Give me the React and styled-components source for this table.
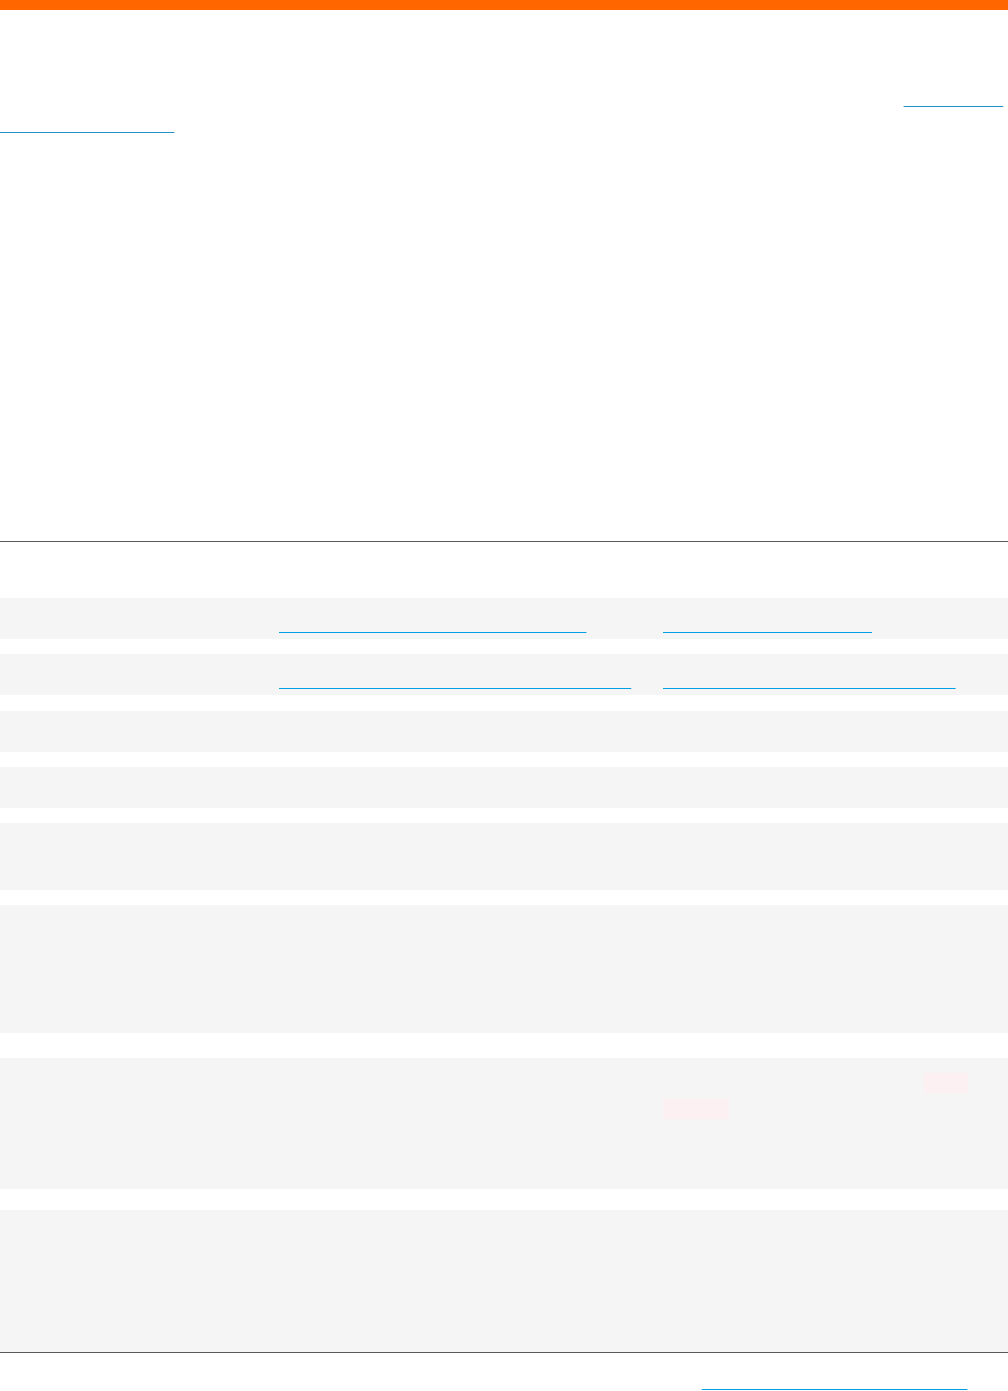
import React from "react";
import styled, { createGlobalStyle } from "styled-components";

const GlobalStyle = createGlobalStyle`
  body {
    margin: 0;
    background: #fff;
    font-family: "Liberation Sans", Arial, sans-serif;
    font-size: 16px;
    line-height: 26px;
    color: transparent;
  }
`;

const TopBar = styled.div`
  height: 10px;
  background-color: #ff6600;
`;

const Main = styled.main`
  display: flow-root;
`;

const Title = styled.h1`
  margin: 38px 0 0;
  font-size: 28px;
  line-height: 36px;
  font-weight: 700;
`;

const SectionTitle = styled.h2`
  margin: 40px 0 16px;
  font-size: 24px;
  line-height: 34px;
  font-weight: 700;
`;

const Para = styled.p`
  margin: 0 0 20px;
`;

const UrlLink = styled.a`
  color: transparent;
  word-break: break-all;
  text-decoration: underline;
  text-decoration-color: #2590c5;
  text-decoration-thickness: 1px;
  text-underline-offset: 4px;
`;

const CellLink = styled.a`
  color: transparent;
  text-decoration: underline;
  text-decoration-color: #00a0e2;
  text-decoration-thickness: 1px;
  text-underline-offset: 4px;
`;

const Code = styled.code`
  font-family: "Liberation Mono", "Courier New", monospace;
  font-size: 12px;
  line-height: 20px;
  padding: 3px 4px;
  background-color: #fdf0f3;
  vertical-align: 2.5px;
`;

const Table = styled.div`
  margin-top: 67px;
  border-top: 1px solid #595959;
  border-bottom: 1px solid #595959;
`;

const HeadRow = styled.div`
  display: grid;
  grid-template-columns: 267px 384px 1fr;
  height: 56px;
  font-weight: 700;
`;

const Row = styled.div`
  display: grid;
  grid-template-columns: 267px 384px 1fr;
  box-sizing: border-box;
  min-height: ${(p) => p.$h}px;
  margin-top: ${(p) => p.$gap || 0}px;
  background-color: #f5f5f5;
`;

const Cell = styled.div`
  padding: 12px 12px 0;
`;

const Footer = styled.p`
  margin: 14px 0 0;
`;

const rows = [
  {
    h: 41,
    gap: 0,
    label: "Linux (x86_64)",
    install: (
      <CellLink href="#install">Installation guide for Linux and Windows 11</CellLink>
    ),
    source: <CellLink href="#download">Download the current release</CellLink>,
  },
  {
    h: 41,
    gap: 15,
    label: "Command-line tools",
    install: (
      <CellLink href="#config">
        Configuration reference for the command-line tool
      </CellLink>
    ),
    source: (
      <CellLink href="#source">Source code and issue tracker on GitHub</CellLink>
    ),
  },
  {
    h: 41,
    gap: 16,
    label: "macOS 13 and later",
    install: "Universal installer for Intel and Apple silicon",
    source: "Signed package, notarised by Apple",
  },
  {
    h: 41,
    gap: 15,
    label: "FreeBSD 14",
    install: "Available from the ports collection",
    source: "Built from the same source tag",
  },
  {
    h: 67,
    gap: 15,
    label: "Windows Server 2022",
    install:
      "MSI installer with optional service setup; requires administrator rights during installation.",
    source:
      "Runs as a background service by default and writes logs to the event viewer.",
  },
  {
    h: 128,
    gap: 15,
    label: "Containers",
    install:
      "Official images are published for amd64 and arm64. Pull the tag that matches your release and mount a volume for persistent data, as shown in the container guide.",
    source:
      "Images are rebuilt weekly to pick up base-image security updates; the application version inside a tag never changes.",
  },
  {
    h: 131,
    gap: 25,
    label: "Health checks",
    install:
      "Enabled by default on every platform. The service checks its storage and network settings once on start-up and then every five minutes.",
    source: (
      <>
        To skip the checks, set this option to <Code>false</Code> or{" "}
        <Code>disabled</Code>. Any other value keeps them on and logs a warning
        when the service starts.
      </>
    ),
  },
  {
    h: 142,
    gap: 21,
    label: "Experimental builds",
    install:
      "Nightly builds for RISC-V and other less common architectures are produced automatically. They pass the unit tests but are not checked on real hardware.",
    source:
      "Report problems with these builds in the issue tracker and include the exact build number shown on the about page.",
  },
];

export default function App() {
  return (
    <>
      <GlobalStyle />
      <TopBar />
      <Main>
        <Title>Supported platforms</Title>
        <Para>
          This page lists every supported platform together with the matching
          installer and source package. For older ones, see the list at{" "}
          <UrlLink href="#table">https://help.example.com/release/table</UrlLink>.
        </Para>
        <Para>
          Each release is built and tested on the platforms below before it is
          published. Installers are signed, and every package ships with a
          checksum file so that you can verify the download. If your platform is
          not listed, the generic archive usually works, although we cannot
          promise support for it and bug reports may take longer to be answered.
        </Para>
        <Para>
          The table is updated with every minor release. Links in the second
          column point to the installation guide for that platform, while the
          third column links to the matching source package or repository. Notes
          at the end of each row describe known limitations, required
          dependencies and any options that behave differently on that system.
        </Para>
        <SectionTitle>Platform overview</SectionTitle>
        <Para>
          Rows marked as experimental are provided as a preview only. They
          receive security fixes, but features may change between releases
          without notice and upgrades are not always tested.
        </Para>
        <Table>
          <HeadRow>
            <Cell>Platform</Cell>
            <Cell>Installation</Cell>
            <Cell>Source and notes</Cell>
          </HeadRow>
          {rows.map((r) => (
            <Row key={r.label} $h={r.h} $gap={r.gap}>
              <Cell>{r.label}</Cell>
              <Cell>{r.install}</Cell>
              <Cell>{r.source}</Cell>
            </Row>
          ))}
        </Table>
        <Footer>
          Need an older version? All previous releases, including their docs, are
          listed in the release archive:{" "}
          <CellLink href="#changelog">View the complete release changelog</CellLink>
        </Footer>
      </Main>
    </>
  );
}
